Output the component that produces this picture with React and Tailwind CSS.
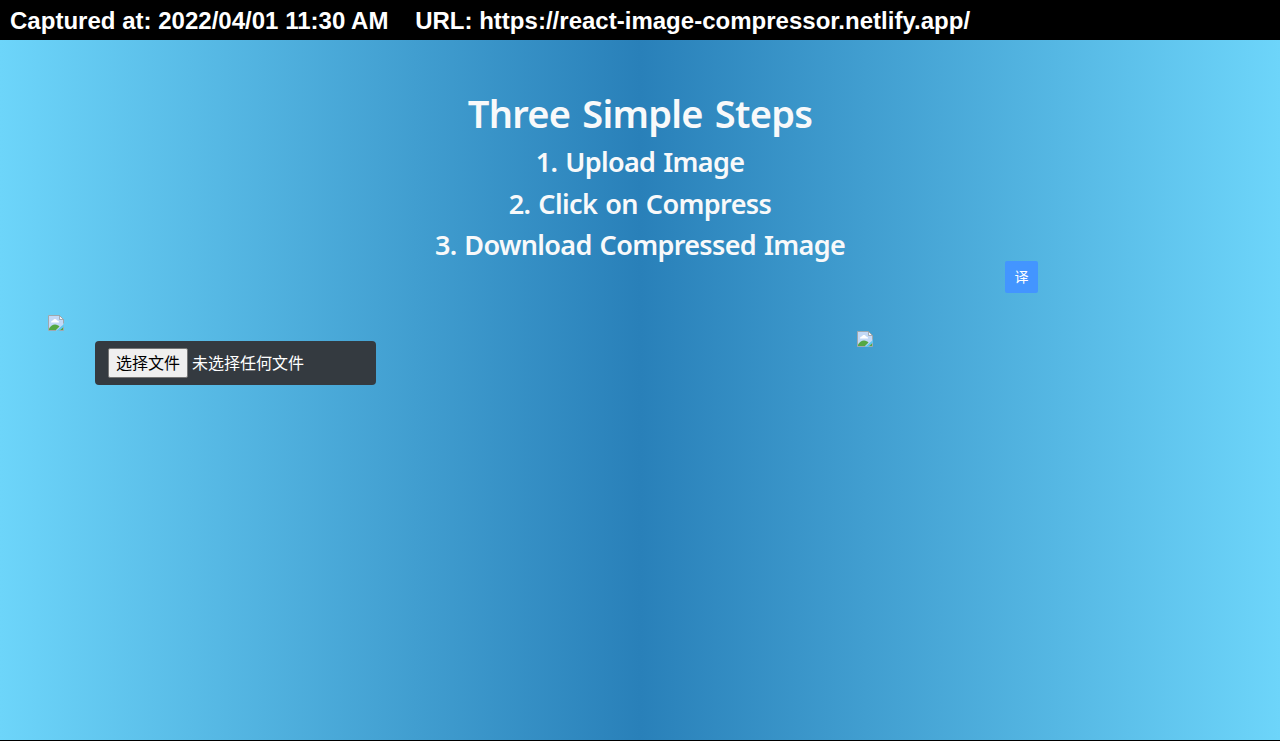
function BrokenImage({ className = '' }) {
  return (
    <svg className={`h-4 w-4 ${className}`} viewBox="0 0 16 16" role="img" aria-hidden="true">
      <path d="M.5.500h11l4 4v6L9 15.500H.5z" fill="#c3d9f7" />
      <path d="M3 7.500c0-1.500 1-2 2-2 .5-2 3.500-2 4 0 1.500 0 2 .8 2 2z" fill="#fff" />
      <path d="M1 15v-1.500c2-2.500 3.500-4 6-4 2 0 3.500 1 4.500 2L8 15z" fill="#55a843" />
      <path d="M11.500 15l3.500-3v3z" fill="#55a843" />
      <path d="M.5 15.500V.500h11l4 4v4M.5 15.500h7.500M11 15.500h4.500v-4" fill="none" stroke="#a0a8ad" />
      <path d="M11.500.500v4h4z" fill="#f4f6f8" stroke="#8c9499" strokeWidth=".7" />
      <path d="M8 16l8-7v2.500L11 16z" fill="#63c6ee" />
    </svg>
  );
}

export default function App() {
  return (
    <div className="flex h-[741px] w-full flex-col overflow-hidden bg-black font-['Liberation_Sans',sans-serif]">
      <header className="h-10 shrink-0 whitespace-pre pl-[10px] text-[24px] leading-[41px] font-bold tracking-[0.014px] text-white">
        {'Captured at: 2022/04/01 11:30 AM    URL: https://react-image-compressor.netlify.app/'}
      </header>
      <main className="relative h-[700px] shrink-0 bg-[linear-gradient(to_right,#6dd5fa,#2980b9,#6dd5fa)]">
        <section className="flex flex-col items-center pt-[49px] font-['Noto_Sans',sans-serif] font-semibold whitespace-nowrap text-[#f8f9fa]">
          <h1 className="mb-2 text-[38px] leading-[48px] tracking-[-0.75px] [word-spacing:3px]">Three Simple Steps</h1>
          <p className="mb-2 text-[27px] leading-[33.5px] tracking-[-0.65px] [word-spacing:1.5px]">1. Upload Image</p>
          <p className="mb-2 text-[27px] leading-[33.5px] tracking-[-0.6px] [word-spacing:1.5px]">2. Click on Compress</p>
          <p className="text-[27px] leading-[33.5px] tracking-[-0.65px] [word-spacing:1.5px]">3. Download Compressed Image</p>
        </section>
        <section className="flex items-start pt-[53px] pl-12">
          <div className="w-[809px]">
            <BrokenImage />
            <label className="mt-[10px] ml-[47px] flex h-11 w-[281px] items-center rounded-[4px] bg-[#343a40] pl-[13px] font-['Noto_Sans_CJK_SC',sans-serif] text-[16px] text-white">
              <span className="flex h-[30px] w-20 items-center justify-center rounded-[2px] border border-[#767676] bg-[#efefef] pb-[2px] text-black">选择文件</span>
              <span className="ml-1 pb-[2px]">未选择任何文件</span>
            </label>
          </div>
          <BrokenImage className="mt-4" />
        </section>
        <button className="absolute top-[221px] left-[1005px] flex h-8 w-[33px] items-center justify-center rounded-[2px] bg-[#4395ff] pb-[2px] font-['Noto_Sans_CJK_SC',sans-serif] text-[14px] text-white">译</button>
      </main>
    </div>
  );
}
